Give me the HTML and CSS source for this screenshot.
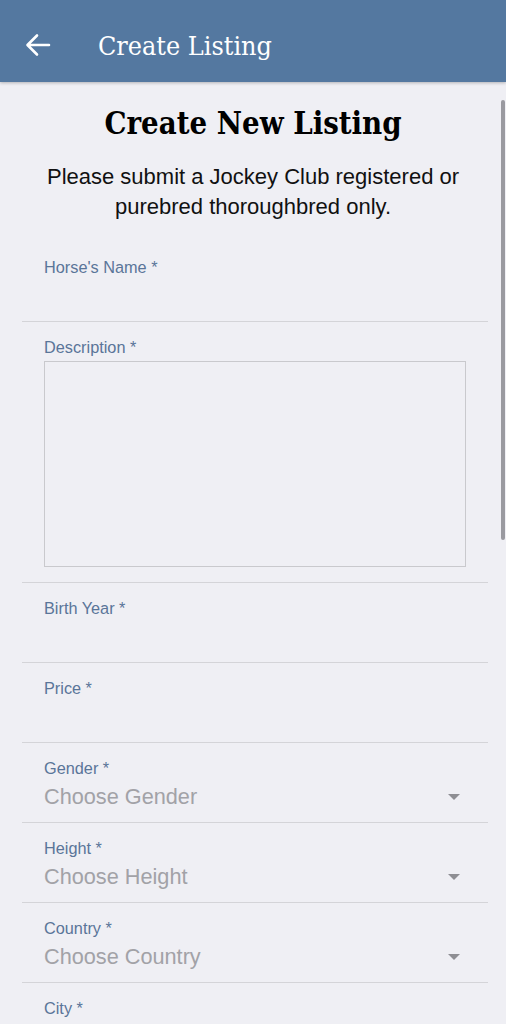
FILE: index.html
```html
<!DOCTYPE html>
<html>
<head>
<meta charset="utf-8">
<link rel="stylesheet" href="styles.css">
</head>
<body>
<header class="appbar">
  <svg class="back" width="26" height="24" viewBox="0 0 26 24"><path d="M24 12H3M12 2.5L2.5 12 12 21.5" fill="none" stroke="#fff" stroke-width="2.6" stroke-linecap="round" stroke-linejoin="round"/></svg>
  <h1 class="appbar-title">Create Listing</h1>
</header>
<main class="page">
  <h2 class="heading">Create New Listing</h2>
  <p class="intro">Please submit a Jockey Club registered or<br>purebred thoroughbred only.</p>
  <div class="form">
    <div class="field"><div class="label">Horse's Name *</div></div>
    <div class="field field-area"><div class="label">Description *</div><div class="textarea"></div></div>
    <div class="field"><div class="label">Birth Year *</div></div>
    <div class="field"><div class="label">Price *</div></div>
    <div class="field"><div class="label">Gender *</div><div class="select"><span>Choose Gender</span><span class="caret"></span></div></div>
    <div class="field"><div class="label">Height *</div><div class="select"><span>Choose Height</span><span class="caret"></span></div></div>
    <div class="field"><div class="label">Country *</div><div class="select"><span>Choose Country</span><span class="caret"></span></div></div>
    <div class="field"><div class="label">City *</div></div>
  </div>
  <div class="scrollbar"></div>
</main>
</body>
</html>
```
FILE: styles.css
```css
html, body { margin: 0; padding: 0; }
body {
  width: 506px;
  height: 1024px;
  overflow: hidden;
  background: #efeff4;
  font-family: "Liberation Sans", Arial, sans-serif;
}
.appbar {
  height: 82px;
  background: #5478a0;
  display: flex;
  align-items: center;
  padding-left: 25px;
  box-shadow: 0 1px 3px rgba(0,0,0,0.25);
  position: relative;
  z-index: 2;
}
.back { margin-top: 8px; }
.appbar-title {
  margin: 0 0 0 47px;
  padding-top: 8px;
  font-family: "DejaVu Serif Condensed", "DejaVu Serif", serif;
  font-weight: normal;
  font-size: 26.7px;
  color: #fff;
}
.page { position: relative; }
.heading {
  margin: 0;
  padding-top: 20px;
  text-align: center;
  font-family: "DejaVu Serif Condensed", "DejaVu Serif", serif;
  font-weight: bold;
  font-size: 30.8px;
  line-height: 42px;
  color: #000;
}
.intro {
  margin: 18px 0 0;
  text-align: center;
  font-size: 22px;
  line-height: 30px;
  color: #111;
}
.form {
  margin: 20px 18px 0 22px;
}
.field {
  height: 80px;
  box-sizing: border-box;
  padding: 15px 22px 0;
  border-bottom: 1px solid #d4d4d8;
}
.field-area { height: 261px; }
.label {
  font-size: 16.3px;
  line-height: 20px;
  color: #5a7599;
}
.textarea {
  margin-top: 4px;
  height: 204px;
  border: 1px solid #c9c9cd;
}
.select {
  display: flex;
  align-items: center;
  justify-content: space-between;
  height: 26px;
  margin-top: 6px;
  font-size: 21.7px;
  color: #a2a2a7;
}
.caret {
  width: 0; height: 0;
  border-left: 6px solid transparent;
  border-right: 6px solid transparent;
  border-top: 6px solid #8e8e93;
  margin-right: 6px;
}
.scrollbar {
  position: absolute;
  right: 1px;
  top: 18px;
  width: 4px;
  height: 440px;
  border-radius: 2px;
  background: #9a9aa0;
}
```
